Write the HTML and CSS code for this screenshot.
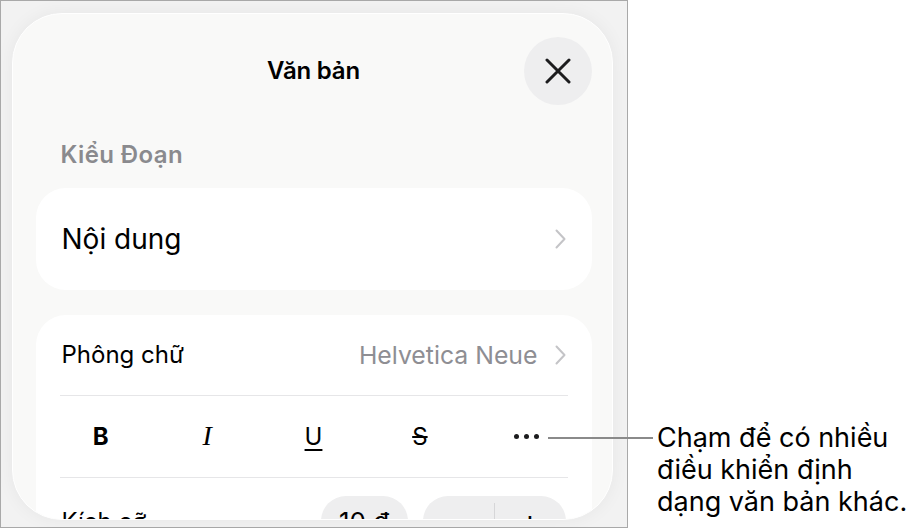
FILE: index.html
```html
<!DOCTYPE html>
<html lang="vi">
<head>
    <meta charset="UTF-8">
    <meta name="viewport" content="width=device-width, initial-scale=1.0">
    <title>Văn bản</title>
    <link rel="stylesheet" href="styles.css">
</head>
<body>
    <div class="page">
        <div class="device">
            <div class="sheet">
                <header class="sheet-head">
                    <span></span>
                    <h1>Văn bản</h1>
                    <button class="close" aria-label="Đóng">
                        <svg width="26" height="26" viewBox="0 0 26 26">
                            <path d="M2 2 L24 24 M24 2 L2 24" />
                        </svg>
                    </button>
                </header>

                <p class="section-label">Kiểu Đoạn</p>

                <div class="card style-card">
                    <span>Nội dung</span>
                    <svg class="chevron" width="11" height="20" viewBox="0 0 11 20">
                        <path d="M1.5 1.5 L9.5 10 L1.5 18.5" />
                    </svg>
                </div>

                <div class="card font-card">
                    <div class="row font-row">
                        <span>Phông chữ</span>
                        <span class="value">
                            Helvetica Neue
                            <svg class="chevron" width="11" height="20" viewBox="0 0 11 20">
                                <path d="M1.5 1.5 L9.5 10 L1.5 18.5" />
                            </svg>
                        </span>
                    </div>
                    <div class="format-row">
                        <span class="fmt fmt-b">B</span>
                        <span class="fmt fmt-i">I</span>
                        <span class="fmt fmt-u">U</span>
                        <span class="fmt fmt-s">S</span>
                        <span class="fmt fmt-more"><i></i><i></i><i></i></span>
                    </div>
                    <div class="row size-row">
                        <span>Kích cỡ</span>
                        <div class="size-controls">
                            <span class="pill">10 đ</span>
                            <span class="stepper">
                                <span>−</span>
                                <span>+</span>
                            </span>
                        </div>
                    </div>
                </div>
            </div>
        </div>

        <div class="callout">
            <p><span class="leader"></span>Chạm để có nhiều<br>điều khiển định<br>dạng văn bản khác.</p>
        </div>
    </div>
</body>
</html>
```

FILE: styles.css
```css
* {
    box-sizing: border-box;
}

body {
    margin: 0;
    background: #fff;
    font-family: Inter, "Noto Sans", sans-serif;
    color: #000;
}

.page {
    display: flex;
    align-items: flex-start;
}

/* outer frame of the screenshot */
.device {
    width: 628px;
    height: 528px;
    border: 1px solid #a9a9a9;
    background: #f2f2f2;
    padding: 12px 14px 7px 11px;
}

.sheet {
    height: 100%;
    border: 1.5px solid #fff;
    border-radius: 50px;
    background: #f9f9f8;
    box-shadow: 0 0 18px rgba(0, 0, 0, 0.05);
    overflow: hidden;
    padding: 22.5px 20.5px 0 22.5px;
}

.sheet-head {
    display: grid;
    grid-template-columns: 68px 1fr 68px;
    align-items: center;
    height: 68px;
}

.sheet-head h1 {
    margin: 0;
    text-align: center;
    font-size: 24px;
    font-weight: 600;
    letter-spacing: -0.2px;
}

.close {
    width: 68px;
    height: 68px;
    border: none;
    border-radius: 50%;
    background: #eeeeef;
    padding: 0;
    display: flex;
    align-items: center;
    justify-content: center;
}

.close path {
    fill: none;
    stroke: #1c1c1e;
    stroke-width: 3;
    stroke-linecap: round;
}

.section-label {
    margin: 36px 0 0 25px;
    font-size: 24px;
    line-height: 28px;
    font-weight: 600;
    letter-spacing: 0.4px;
    color: #8a8a8e;
}

.card {
    background: #fff;
    border-radius: 30px;
}

.style-card {
    margin-top: 19px;
    height: 102px;
    display: flex;
    align-items: center;
    justify-content: space-between;
    padding: 0 26px;
    font-size: 28px;
}

.chevron path {
    fill: none;
    stroke: #c4c4c7;
    stroke-width: 2;
    stroke-linecap: round;
    stroke-linejoin: round;
}

.font-card {
    margin-top: 25px;
    height: 270px;
}

.row {
    display: flex;
    align-items: center;
    justify-content: space-between;
    margin: 0 24px;
    padding: 0 2px;
    font-size: 24px;
}

.font-row {
    height: 81px;
    border-bottom: 1.5px solid #e6e6e8;
}

.value {
    display: flex;
    align-items: center;
    gap: 17px;
    font-size: 24.8px;
    color: #8e8e93;
}

.format-row {
    display: grid;
    grid-template-columns: repeat(5, 1fr);
    align-items: center;
    justify-items: center;
    margin: 0 12px;
    height: 81px;
    font-size: 24px;
}

.fmt-b {
    font-weight: 700;
}

.fmt-i {
    font-family: "Liberation Serif", serif;
    font-style: italic;
    font-size: 28px;
}

.fmt-u {
    text-decoration: underline;
    text-decoration-thickness: 1.5px;
    text-underline-offset: 4px;
}

.fmt-s {
    text-decoration: line-through;
    text-decoration-thickness: 1.5px;
}

.fmt-more {
    display: flex;
    gap: 5px;
}

.fmt-more i {
    width: 5px;
    height: 5px;
    border-radius: 50%;
    background: #1c1c1e;
}

.size-row {
    height: 88px;
    border-top: 1.5px solid #e6e6e8;
}

.size-controls {
    display: flex;
    gap: 15px;
}

.pill {
    width: 87px;
    height: 50px;
    border-radius: 25px;
    background: #eeeeef;
    display: flex;
    align-items: center;
    justify-content: center;
    font-size: 26px;
}

.stepper {
    width: 143px;
    height: 50px;
    border-radius: 25px;
    background: #eeeeef;
    display: flex;
    align-items: center;
}

.stepper span {
    flex: 1;
    text-align: center;
    font-size: 30px;
}

.stepper span + span {
    border-left: 1px solid #d6d6d8;
}

/* annotation on the right */
.callout {
    margin: 422px 0 0 29px;
}

.callout p {
    position: relative;
    margin: 0;
    font-size: 27px;
    line-height: 32px;
    color: #000;
}

.leader {
    position: absolute;
    left: -109px;
    top: 15px;
    width: 105px;
    height: 2px;
    background: #8a8a8a;
}
```
